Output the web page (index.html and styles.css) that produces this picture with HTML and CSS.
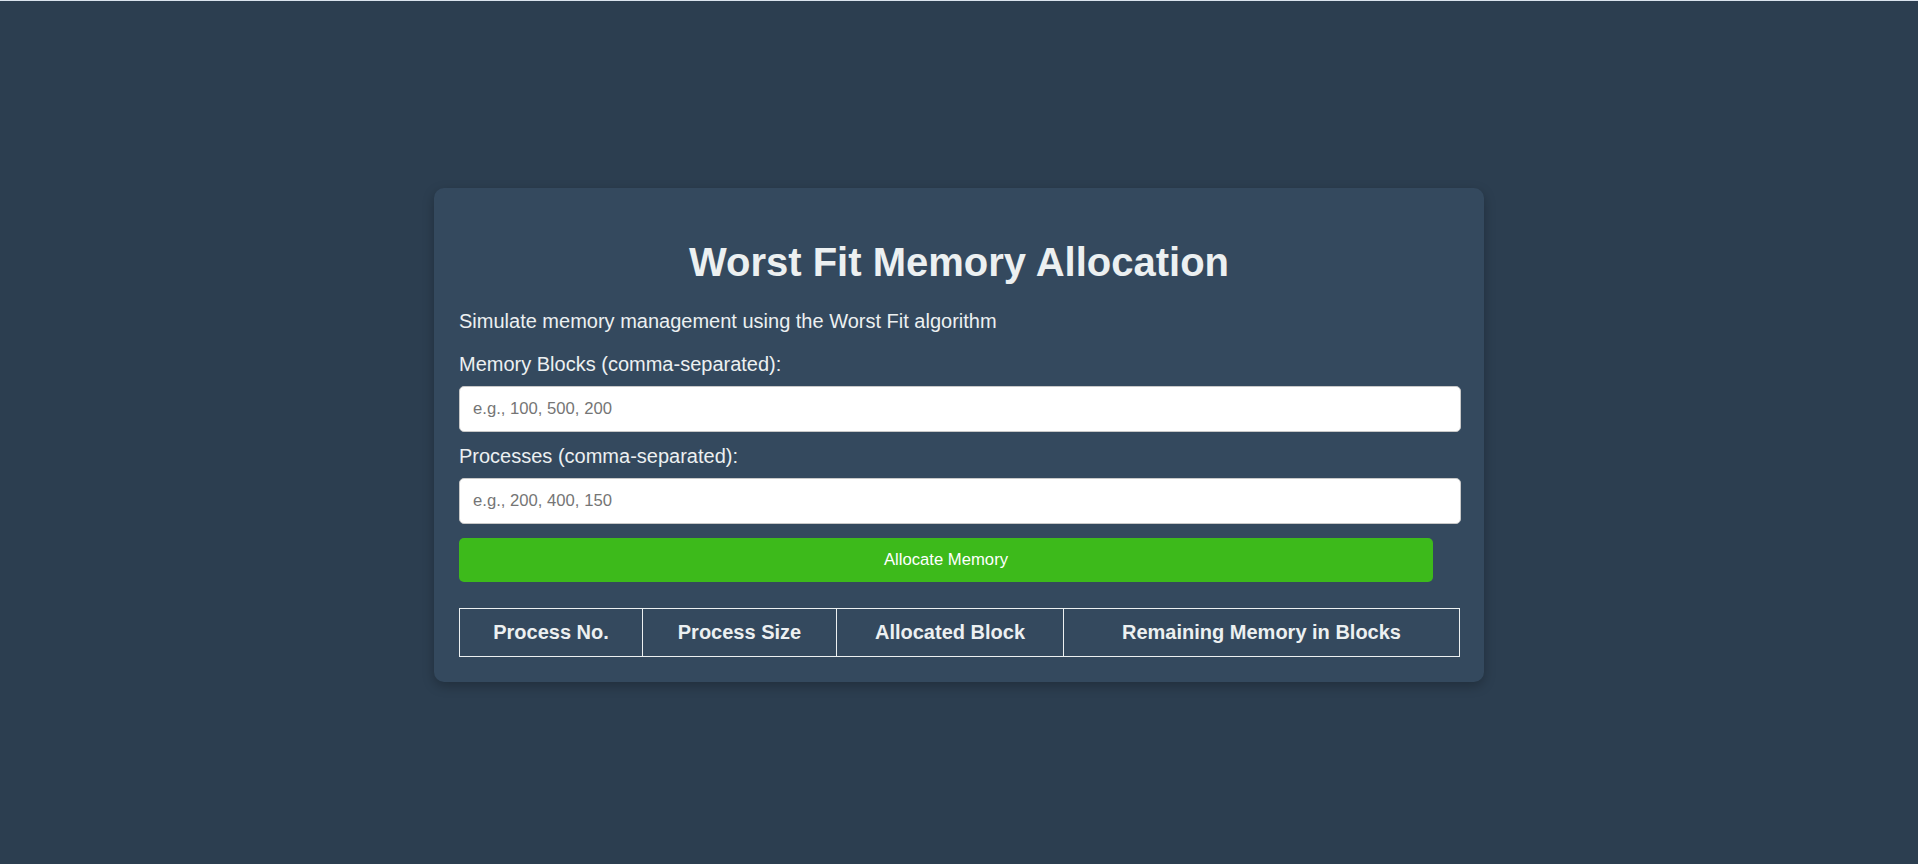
FILE: index.html
```html
<!DOCTYPE html>
<html lang="en">
<head>
<meta charset="utf-8">
<title>Worst Fit Memory Allocation</title>
<link rel="stylesheet" href="styles.css">
</head>
<body>
<main class="page">
  <section class="card">
    <h1 class="title">Worst Fit Memory Allocation</h1>
    <p class="subtitle">Simulate memory management using the Worst Fit algorithm</p>
    <label class="label" for="blocks">Memory Blocks (comma-separated):</label>
    <input class="field" id="blocks" type="text" placeholder="e.g., 100, 500, 200">
    <label class="label label-second" for="procs">Processes (comma-separated):</label>
    <input class="field" id="procs" type="text" placeholder="e.g., 200, 400, 150">
    <button class="btn" type="button">Allocate Memory</button>
    <table class="result">
      <colgroup>
        <col class="c1"><col class="c2"><col class="c3"><col class="c4">
      </colgroup>
      <thead>
        <tr>
          <th>Process No.</th>
          <th>Process Size</th>
          <th>Allocated Block</th>
          <th>Remaining Memory in Blocks</th>
        </tr>
      </thead>
    </table>
  </section>
</main>
</body>
</html>
```
FILE: styles.css
```css
html, body {
  margin: 0;
  padding: 0;
}

body {
  background: #2c3e50;
  border-top: 1px solid #dbe4ee;
  min-height: 864px;
  box-sizing: border-box;
  font-family: "Liberation Sans", Arial, sans-serif;
  color: #ecf0f1;
}

.page {
  display: flex;
  justify-content: center;
  padding-top: 187px;
}

.card {
  width: 1050px;
  box-sizing: border-box;
  background: #34495e;
  border-radius: 10px;
  padding: 25px;
  box-shadow: 0 4px 12px rgba(0, 0, 0, 0.25);
}

.title {
  margin: 25px 0 0;
  font-size: 40px;
  line-height: 1.2;
  font-weight: bold;
  text-align: center;
  color: #ecf0f1;
}

.subtitle {
  margin: 22.6px 0 0;
  font-size: 20px;
  line-height: 1.2;
}

.label {
  display: block;
  margin-top: 19.2px;
  font-size: 20px;
  line-height: 1.2;
}

.label-second {
  margin-top: 12px;
}

.field {
  display: block;
  box-sizing: border-box;
  width: calc(100% + 2px);
  height: 46px;
  margin: 10.3px 0 0;
  padding: 0 13px;
  border: 1px solid #c8c8c8;
  border-radius: 5px;
  background: #fff;
  font-family: "Liberation Sans", Arial, sans-serif;
  font-size: 16.67px;
  color: #333;
  outline: none;
}

.field::placeholder {
  color: #757575;
}

.btn {
  display: block;
  box-sizing: border-box;
  width: calc(100% - 26px);
  height: 44px;
  margin-top: 14px;
  border: none;
  border-radius: 5px;
  background: #3dba1b;
  color: #fff;
  font-family: "Liberation Sans", Arial, sans-serif;
  font-size: 16.67px;
  cursor: pointer;
}

.result {
  width: 100%;
  margin-top: 25.5px;
  border-collapse: collapse;
  table-layout: fixed;
}

.c1 { width: 183px; }
.c2 { width: 194px; }
.c3 { width: 227px; }
.c4 { width: 396px; }

.result th {
  border: 1px solid #ecf0f1;
  padding: 12px 8px;
  font-size: 20px;
  line-height: 1.15;
  font-weight: bold;
  text-align: center;
  color: #ecf0f1;
}
```
